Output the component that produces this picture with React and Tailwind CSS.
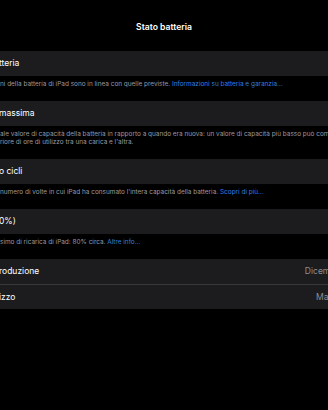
export default function App() {
  const font = { fontFamily: "Inter, 'Noto Sans', sans-serif" };
  const Row = ({ left, right, rightClass, sep }) => (
    <div className={`h-[25px] bg-[#1c1c1e] flex items-center whitespace-nowrap overflow-hidden ${sep ? "border-t border-[#38383a]" : ""}`}>
      <span className="text-[8.5px] text-white -ml-[1px] shrink-0">{left}</span>
      {right && <span className={`text-[8.5px] text-[#8e8e93] ml-auto shrink-0 ${rightClass}`}>{right}</span>}
    </div>
  );
  const Footer = ({ lines, link }) => (
    <div className="pt-[4px] pb-[13px] text-[6.45px] leading-[8px] text-[#9a9aa0] whitespace-nowrap overflow-hidden">
      {lines.map((l, i) => (
        <div key={i}>
          {l}
          {i === lines.length - 1 && link && <span className="text-[#2f7fe0]"> {link}</span>}
        </div>
      ))}
    </div>
  );
  return (
    <div className="w-[328px] h-[410px] bg-black overflow-hidden" style={font}>
      <div className="h-[51px] flex items-center justify-center pt-[3px]">
        <span className="text-[8.6px] font-semibold text-white">Stato batteria</span>
      </div>
      <Row left="tteria" />
      <Footer lines={["ni della batteria di iPad sono in linea con quelle previste."]} link="Informazioni su batteria e garanzia…" />
      <Row left=" massima" />
      <Footer lines={["ale valore di capacità della batteria in rapporto a quando era nuova: un valore di capacità più basso può comportare", "riore di ore di utilizzo tra una carica e l'altra."]} />
      <Row left="o cicli" />
      <Footer lines={["numero di volte in cui iPad ha consumato l'intera capacità della batteria."]} link="Scopri di più…" />
      <Row left="0%)" />
      <Footer lines={["simo di ricarica di iPad: 80% circa."]} link="Altre info…" />
      <Row left="roduzione" right="Dicembre 2020" rightClass="-mr-[39px]" />
      <Row left="izzo" right="Marzo 2021" rightClass="-mr-[35px]" sep />
    </div>
  );
}
